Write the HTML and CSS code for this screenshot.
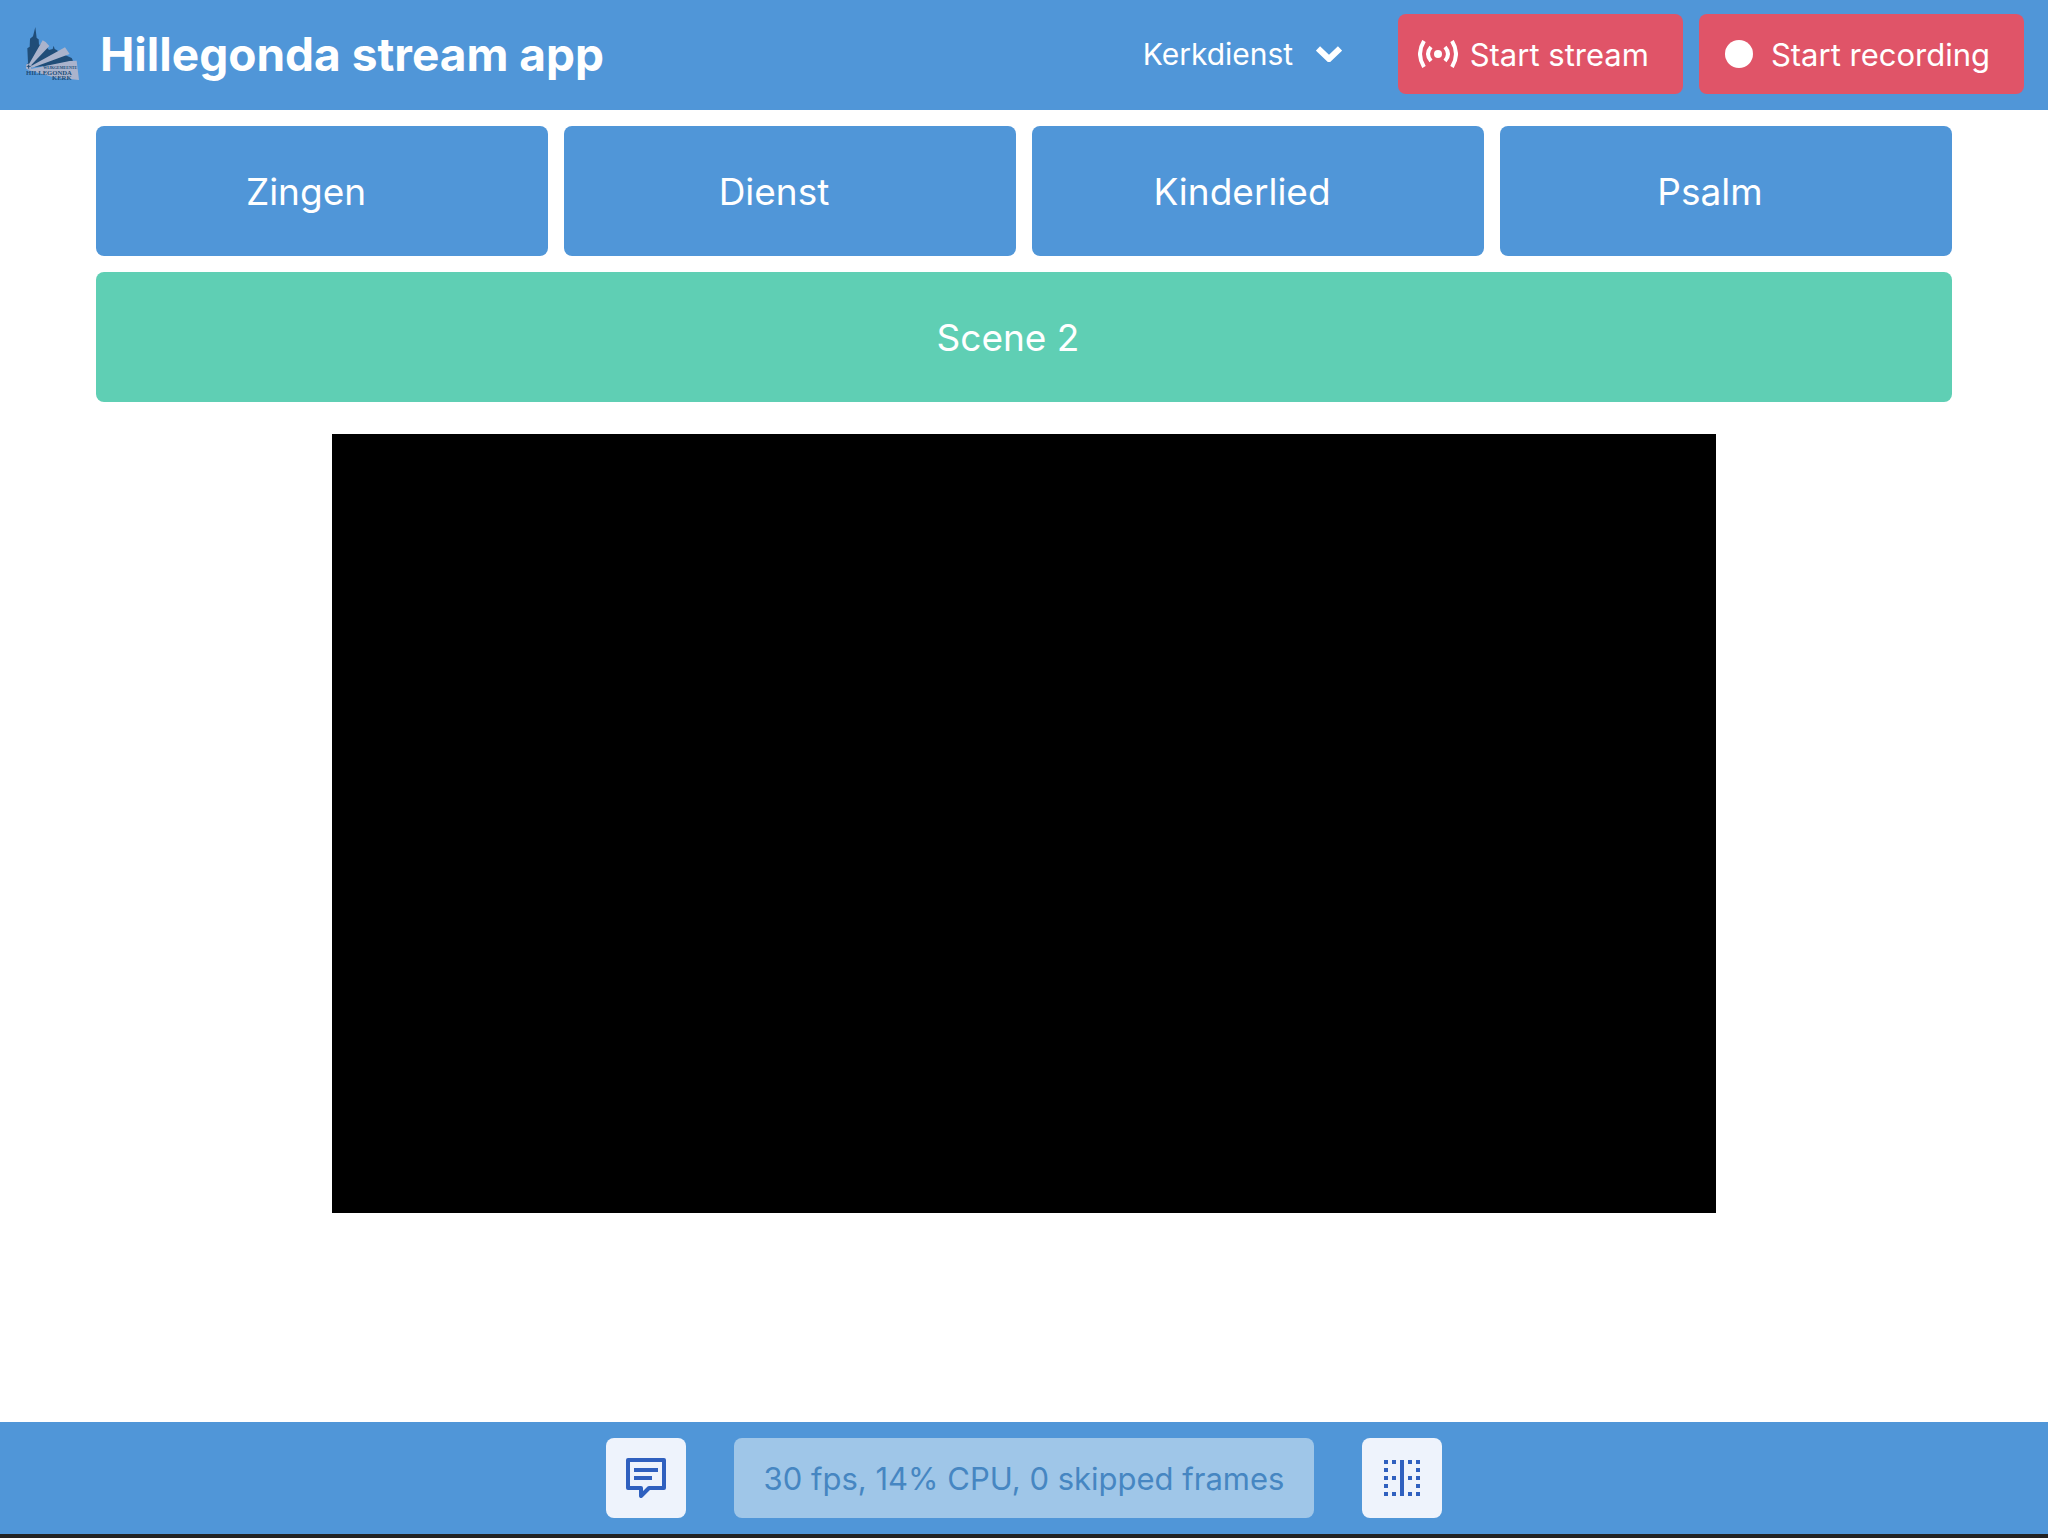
FILE: index.html
```html
<!DOCTYPE html>
<html lang="nl">
<head>
<meta charset="utf-8">
<meta name="viewport" content="width=device-width, initial-scale=1">
<title>Hillegonda stream app</title>
<link rel="stylesheet" href="styles.css">
</head>
<body>
<header class="navbar">
  <div class="brand">
    <svg class="logo" viewBox="48 36 162 162" aria-hidden="true">
      <path fill="#204d78" d="M76 36l4 33 6 4 1 17 12-7 18 22 11-3 3-10 3 10 6 3 13 10 32 14 4 8-60 14-78 7-3-5 6-10-2-43 7-5 1-24 9-7z"/>
      <path fill="#aab3cc" d="M55 151l43-75 9 5 11 12-57 60zM62 154l103-57 14 20-112 41zM62 162l117-24 21 -1 7 58-76-8-65-19-12-2z"/>
      <circle cx="56" cy="155" r="9" fill="#aab3cc"/>
      <path stroke="#204d78" stroke-width="3" d="M56 149v12M50 154h12"/>
      <text x="100" y="163" class="logo-small">WIJKGEMEENTE</text>
      <text x="48" y="180" class="logo-name">HILLEGONDA</text>
      <text x="126" y="194" class="logo-name">KERK</text>
    </svg>
    <h1 class="title">Hillegonda stream app</h1>
  </div>
  <div class="actions">
    <div class="collection">
      <select class="collection-select" aria-label="Scene collection"><option>Kerkdienst</option></select>
      <svg class="chevron" viewBox="0 0 26 16" aria-hidden="true"><path d="M2 2.500l11 10.500L24 2.500" fill="none" stroke="#fff" stroke-width="6"/></svg>
    </div>
    <button class="button danger stream" type="button">
      <svg class="broadcast" viewBox="0 0 40 28" aria-hidden="true">
        <circle cx="20" cy="14" r="4"/>
        <path d="M6 1q-8 13 0 26M34 1q8 13 0 26M13 7q-6 7 0 14M27 7q6 7 0 14" fill="none" stroke="#fff" stroke-width="4"/>
      </svg>
      <span>Start stream</span>
    </button>
    <button class="button danger record" type="button">
      <span class="record-dot"></span>
      <span>Start recording</span>
    </button>
  </div>
</header>
<main class="content">
  <div class="scenes">
    <button class="scene" type="button">Zingen</button>
    <button class="scene" type="button">Dienst</button>
    <button class="scene" type="button">Kinderlied</button>
    <button class="scene" type="button">Psalm</button>
    <button class="scene active" type="button">Scene 2</button>
  </div>
  <div class="preview"></div>
</main>
<footer class="footer">
  <button class="button light" type="button" aria-label="Messages">
    <svg class="icon" viewBox="0 0 40 40" aria-hidden="true">
      <path d="M2 2h36v28H23l-8 8V30H2z" fill="none" stroke="#2f60bf" stroke-width="4" stroke-linejoin="round"/>
      <path d="M8 12h24M8 20h18" stroke="#2f60bf" stroke-width="4"/>
    </svg>
  </button>
  <button class="button status" type="button" disabled>30 fps, 14% CPU, 0 skipped frames</button>
  <button class="button light" type="button" aria-label="Split view">
    <svg class="icon" viewBox="0 0 40 40" aria-hidden="true">
      <path d="M2 4h12M2 20h12M2 36h12M26 4h12M26 20h12M26 36h12" stroke="#2f60bf" stroke-width="4" stroke-dasharray="4 4"/>
      <path d="M4 10v4M4 26v4M36 10v4M36 26v4M20 2v36" stroke="#2f60bf" stroke-width="4"/>
    </svg>
  </button>
</footer>
</body>
</html>
```
FILE: styles.css
```css
* {
  box-sizing: border-box;
}

body {
  margin: 0;
  min-height: 100vh;
  display: flex;
  flex-direction: column;
  background: #fff;
  color: #fff;
  border-bottom: 4px solid #232323;
  font-family: Inter, "Liberation Sans", sans-serif;
  font-size: 31px;
}

button,
select {
  font: inherit;
  color: inherit;
  border: 0;
  margin: 0;
}

.navbar {
  display: flex;
  justify-content: space-between;
  align-items: center;
  padding: 14px 24px 16px 26px;
  background: #5096d8;
}

.brand,
.actions {
  display: flex;
  align-items: center;
}

.brand {
  gap: 20px;
}

.actions {
  gap: 16px;
}

.logo {
  width: 54px;
  height: 54px;
}

.logo-small,
.logo-name {
  font-family: "Liberation Serif", serif;
  font-weight: 700;
  fill: #204d78;
}

.logo-small {
  font-size: 12px;
}

.logo-name {
  font-size: 20px;
}

.title {
  margin: 0;
  font-size: 46px;
  font-weight: 700;
  line-height: 56px;
}

.collection {
  display: grid;
  align-items: center;
  margin-right: 40px;
}

.collection-select,
.chevron {
  grid-area: 1 / 1;
}

.collection-select {
  appearance: none;
  background: transparent;
  height: 80px;
  padding: 0 48px 0 0;
  font-size: 30px;
}

.chevron {
  justify-self: end;
  width: 26px;
  height: 16px;
  pointer-events: none;
}

.button {
  display: flex;
  align-items: center;
  justify-content: center;
  height: 80px;
  border-radius: 8px;
}

.danger {
  background: #e05468;
}

.stream {
  gap: 12px;
  padding: 0 34px 0 20px;
}

.record {
  gap: 18px;
  padding: 0 34px 0 26px;
}

.broadcast {
  width: 40px;
  height: 28px;
  fill: #fff;
}

.record-dot {
  width: 28px;
  height: 28px;
  border-radius: 50%;
  background: #fff;
}

.content {
  padding: 16px 96px;
}

.scenes {
  display: grid;
  grid-template-columns: repeat(4, 1fr);
  gap: 16px;
}

.scene {
  height: 130px;
  padding: 0 32px 0 0;
  border-radius: 8px;
  background: #5096d8;
  font-size: 37px;
}

.active {
  grid-column: 1 / -1;
  background: #5fcfb4;
}

.preview {
  margin: 32px 236px 0;
  aspect-ratio: 16 / 9;
  background: #000;
}

.footer {
  display: flex;
  justify-content: center;
  gap: 48px;
  margin-top: auto;
  padding: 16px;
  background: #5096d8;
}

.light {
  width: 80px;
  padding: 0;
  background: #eef3fc;
}

.icon {
  width: 40px;
  height: 40px;
}

.status {
  padding: 0 30px;
  background: #9fc6e8;
  color: #4686c2;
}
```
